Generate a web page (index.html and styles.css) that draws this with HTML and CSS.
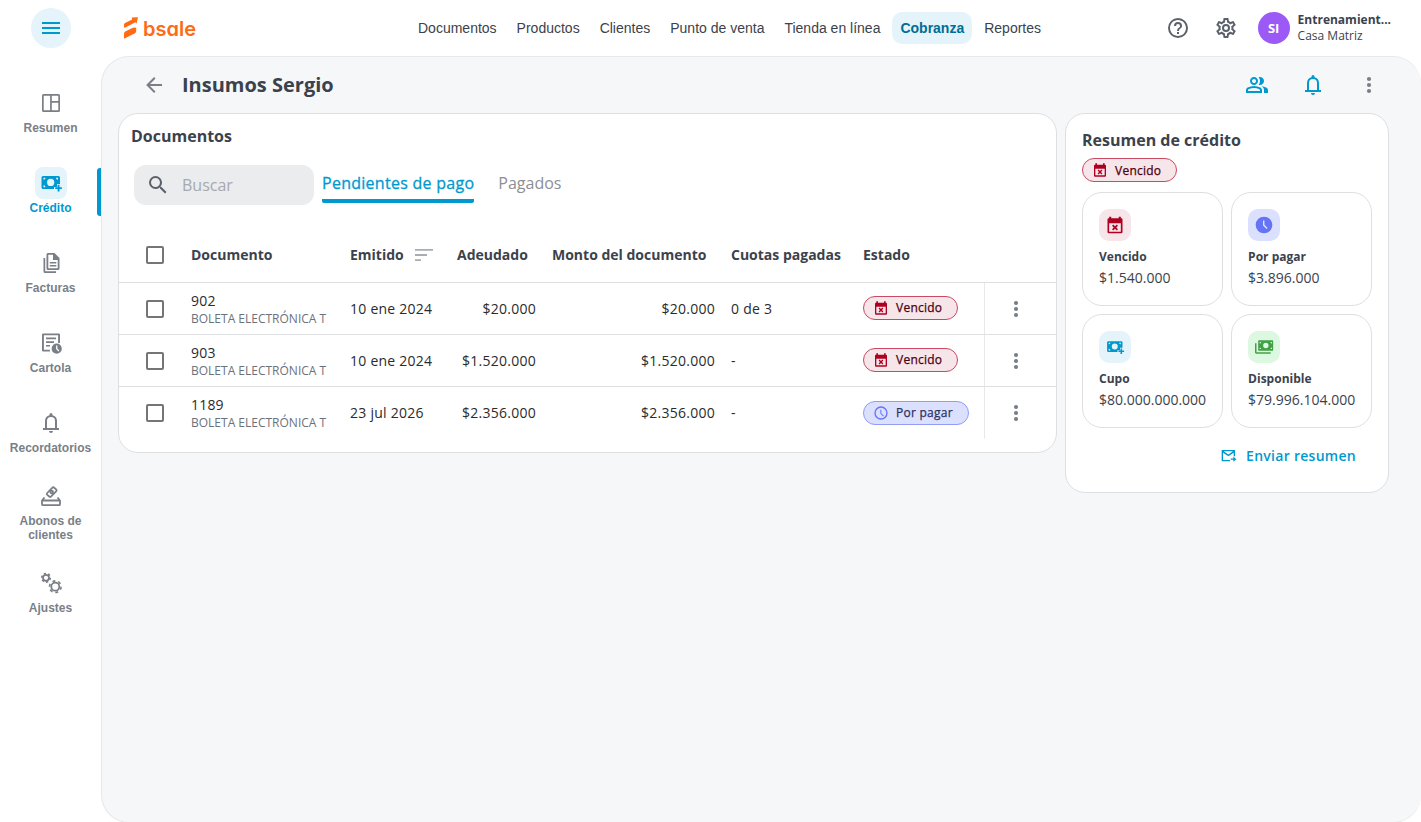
FILE: index.html
```html
<!DOCTYPE html>
<html lang="es">
<head>
  <meta charset="UTF-8">
  <meta name="viewport" content="width=device-width, initial-scale=1.0">
  <title>Cobranza - Insumos Sergio</title>
  <link rel="stylesheet" href="styles.css">
</head>
<body>

  <!-- Shared icons -->
  <svg class="icon-defs" xmlns="http://www.w3.org/2000/svg">
    <symbol id="i-bell" viewBox="0 0 24 24"><path fill-rule="evenodd" d="M4 19v-2h2v-7a6 6 0 0 1 4.500-5.800V3.500a1.500 1.500 0 0 1 3 0v.7A6 6 0 0 1 18 10v7h2v2H4Zm8 3a2 2 0 0 1-2-2h4a2 2 0 0 1-2 2Zm-4-5h8v-7a4 4 0 0 0-8 0v7Z"/></symbol>
    <symbol id="i-dots" viewBox="0 0 24 24"><circle cx="12" cy="6" r="2.100"/><circle cx="12" cy="12" r="2.100"/><circle cx="12" cy="18" r="2.100"/></symbol>
    <symbol id="i-calendar" viewBox="0 0 24 24"><path fill-rule="evenodd" d="M5 2h2.500v2h9V2H19v2h.5A1.500 1.500 0 0 1 21 5.500v15a1.500 1.500 0 0 1-1.500 1.500h-15A1.500 1.500 0 0 1 3 20.500v-15A1.500 1.500 0 0 1 4.500 4H5V2Zm0 8v10h14V10H5Zm3.400 2.900 1.500-1.500 2.100 2.100 2.100-2.100 1.500 1.500-2.100 2.100 2.100 2.100-1.500 1.500-2.100-2.100-2.100 2.100-1.500-1.500 2.100-2.100-2.100-2.100Z"/></symbol>
    <symbol id="i-clock-outline" viewBox="0 0 24 24"><path d="M12 20a8 8 0 1 0 0-16 8 8 0 0 0 0 16m0-18a10 10 0 1 1 0 20 10 10 0 0 1 0-20m.5 5v5.200l3.800 3.800-1.200 1.100L11 12.800V7h1.500Z"/></symbol>
    <symbol id="i-cash-plus" viewBox="0 0 24 24"><path fill-rule="evenodd" d="M4 5h15.500A1.500 1.500 0 0 1 21 6.500V13h-3v3h-3v2H4a1.500 1.500 0 0 1-1.500-1.500v-10A1.500 1.500 0 0 1 4 5Zm7.700 2.800a3.600 3.600 0 1 0 0 7.200 3.600 3.600 0 0 0 0-7.200ZM4.500 6.800v2a2 2 0 0 0 2-2h-2Zm12.500 0a2 2 0 0 0 2 2v-2h-2ZM4.500 14.200v2h2a2 2 0 0 0-2-2Z"/><path d="M18.600 13.800h1.900v2.400h2.400v1.900h-2.400v2.400h-1.900v-2.400h-2.400v-1.900h2.400z"/></symbol>
  </svg>

  <!-- Top bar -->
  <header class="topbar">
    <div class="menu-slot">
      <button class="menu-button" aria-label="Menú">
        <svg class="icon" viewBox="0 0 24 24"><path d="M3 6h18v2H3V6m0 5h18v2H3v-2m0 5h18v2H3v-2Z"/></svg>
      </button>
    </div>
    <a class="logo" href="#">
      <svg class="logo-mark" viewBox="0 0 14 22"><path d="M0 10.300V7.500Q0 6.500 1 5.900L8.200 2.600 7.600.6 14 .3l-1.400 6.200-1.300-1.200L1 10.700Z"/><path d="M0 21.700v-5Q0 15.300 1.200 14.600L9 10.800q2.500-.8 3.200.2v3.200q-.2 1.300-1.300 2Z"/></svg>
      <span class="logo-text">bsale</span>
    </a>
    <nav class="main-nav">
      <a href="#">Documentos</a>
      <a href="#">Productos</a>
      <a href="#">Clientes</a>
      <a href="#">Punto de venta</a>
      <a href="#">Tienda en línea</a>
      <a href="#" class="active">Cobranza</a>
      <a href="#">Reportes</a>
    </nav>
    <div class="user-area">
      <svg class="icon" viewBox="0 0 24 24"><path d="M11 18h2v-2h-2v2m1-16A10 10 0 0 0 2 12a10 10 0 0 0 10 10 10 10 0 0 0 10-10A10 10 0 0 0 12 2m0 18c-4.410 0-8-3.590-8-8s3.590-8 8-8 8 3.590 8 8-3.590 8-8 8m0-14a4 4 0 0 0-4 4h2a2 2 0 0 1 2-2 2 2 0 0 1 2 2c0 2-3 1.750-3 5h2c0-2.250 3-2.500 3-5a4 4 0 0 0-4-4Z"/></svg>
      <svg class="icon" viewBox="0 0 24 24"><path d="M12 8a4 4 0 0 1 4 4 4 4 0 0 1-4 4 4 4 0 0 1-4-4 4 4 0 0 1 4-4m0 2a2 2 0 0 0-2 2 2 2 0 0 0 2 2 2 2 0 0 0 2-2 2 2 0 0 0-2-2m-2 12c-.25 0-.46-.18-.5-.42l-.37-2.650c-.63-.25-1.170-.59-1.690-.99l-2.490 1.010c-.22.080-.49 0-.61-.22l-2-3.460a.493.493 0 0 1 .12-.64l2.110-1.660L4.500 12l.070-1-2.110-1.630a.493.493 0 0 1-.12-.64l2-3.460c.12-.22.390-.31.610-.22l2.490 1c.52-.39 1.060-.73 1.690-.98l.37-2.650c.040-.24.250-.42.500-.42h4c.25 0 .46.180.5.420l.37 2.650c.63.250 1.170.590 1.690.980l2.490-1c.22-.090.490 0 .61.220l2 3.460c.13.220.070.490-.12.640L19.430 11l.07 1-.07 1 2.110 1.630c.19.150.250.420.12.640l-2 3.460c-.12.220-.39.310-.61.220l-2.490-1c-.52.390-1.060.730-1.690.980l-.37 2.650c-.040.240-.25.420-.5.420h-4m1.250-18-.37 2.610c-1.200.250-2.260.890-3.030 1.780L5.440 7.350l-.75 1.300L6.800 10.200a5.550 5.550 0 0 0 0 3.600l-2.120 1.560.75 1.300 2.430-1.040c.77.880 1.820 1.520 3.010 1.760l.37 2.620h1.520l.37-2.610c1.190-.25 2.240-.89 3.010-1.770l2.430 1.040.75-1.300-2.120-1.550c.4-1.170.4-2.440 0-3.610l2.110-1.550-.75-1.300-2.410 1.040a5.420 5.420 0 0 0-3.030-1.770L12.750 4h-1.500Z"/></svg>
      <div class="user">
        <span class="avatar">SI</span>
        <div class="user-info">
          <strong>Entrenamient...</strong>
          <span>Casa Matriz</span>
        </div>
      </div>
    </div>
  </header>

  <div class="layout">

    <!-- Sidebar -->
    <aside class="sidebar">
      <a href="#" class="side-item">
        <span class="side-icon"><svg class="icon" viewBox="0 0 24 24"><path fill-rule="evenodd" d="M4.500 3h15A1.500 1.500 0 0 1 21 4.500v15a1.500 1.500 0 0 1-1.500 1.500h-15A1.500 1.500 0 0 1 3 19.500v-15A1.500 1.500 0 0 1 4.500 3Zm.2 1.700v14.600h6.400V4.700H4.700Zm8.100 0V10h6.500V4.700h-6.500Zm0 7v7.600h6.500v-7.600h-6.500Z"/></svg></span>
        Resumen
      </a>
      <a href="#" class="side-item active">
        <span class="side-icon"><svg class="icon"><use href="#i-cash-plus"/></svg></span>
        Crédito
      </a>
      <a href="#" class="side-item">
        <span class="side-icon"><svg class="icon" viewBox="0 0 24 24"><path fill-rule="evenodd" d="M9 2h6.500L20.500 7v10.500A1.500 1.500 0 0 1 19 19H9a1.500 1.500 0 0 1-1.500-1.500v-14A1.500 1.500 0 0 1 9 2Zm.3 1.800v13.400h9.400V9H14V3.800H9.300Zm1.500 7.200h6.500v1.500h-6.500V11Zm0 3h6.500v1.500h-6.500V14Z"/><path d="M4.500 7h1.700v13.300H17V22H6a1.500 1.500 0 0 1-1.500-1.500z"/></svg></span>
        Facturas
      </a>
      <a href="#" class="side-item">
        <span class="side-icon"><svg class="icon" viewBox="0 0 24 24"><path d="M4.300 2.500h15.400A1.300 1.300 0 0 1 21 3.800V12h-1.900V4.300H4.900v14.400h6v1.800H4.300A1.300 1.300 0 0 1 3 19.200V3.800a1.300 1.300 0 0 1 1.300-1.300Z"/><path d="M7 6.500h10v1.700H7zM7 10.200h8v1.700H7zM7 13.900h4v1.700H7z"/><path fill-rule="evenodd" d="M17.700 12.600a5.100 5.100 0 1 1 0 10.200 5.100 5.100 0 0 1 0-10.200Zm-.6 2v3.500l2.300 2.300.9-.9-1.900-1.900v-3h-1.300Z"/></svg></span>
        Cartola
      </a>
      <a href="#" class="side-item">
        <span class="side-icon"><svg class="icon"><use href="#i-bell"/></svg></span>
        Recordatorios
      </a>
      <a href="#" class="side-item tall">
        <span class="side-icon"><svg class="icon stroke" viewBox="0 0 24 24"><path d="M5.500 13.500 3 16.500v3.700q0 1 1 1h16q1 0 1-1v-3.700l-2.500-3M3 16.500h18"/><path d="m8.200 9 5-5.200q1-1 2-.1l1.900 1.600q1 1 0 2l-4.900 5.100q-1 1-2 .1l-1.900-1.600q-1-.9-.1-1.900Z"/><circle cx="12.700" cy="8" r="1.300"/></svg></span>
        Abonos de clientes
      </a>
      <a href="#" class="side-item">
        <span class="side-icon"><svg class="icon stroke gears" viewBox="0 0 24 24"><circle cx="7" cy="6.800" r="3"/><circle class="teeth" cx="7" cy="6.800" r="4.300" pathLength="12"/><circle cx="16.300" cy="15.700" r="4"/><circle class="teeth" cx="16.300" cy="15.700" r="5.800" pathLength="12"/></svg></span>
        Ajustes
      </a>
    </aside>

    <!-- Content -->
    <main class="content">
      <div class="page-header">
        <svg class="icon back" viewBox="0 0 24 24"><path d="M20 11v2H8l5.500 5.500-1.420 1.420L4.160 12l7.920-7.920L13.500 5.500 8 11h12Z"/></svg>
        <h1>Insumos Sergio</h1>
        <div class="page-actions">
          <svg class="icon" viewBox="0 0 24 24"><path fill-rule="evenodd" d="M1 20v-2.800q0-.85.438-1.562T2.600 14.550q1.550-.775 3.150-1.162T9 13t3.250.388 3.150 1.162q.725.375 1.163 1.088T17 17.200V20zm18 0v-3q0-1.100-.612-2.113T16.650 13.150q1.275.150 2.400.513t2.100.887q.9.5 1.375 1.112T23 17v3zM9 12q-1.650 0-2.825-1.175T5 8t1.175-2.825T9 4t2.825 1.175T13 8t-1.175 2.825T9 12m10-4q0 1.650-1.175 2.825T15 12q-.275 0-.7-.062T13.600 11.800q.675-.8 1.037-1.775T15 8t-.362-2.025T13.600 4.200q.350-.125.700-.163T15 4q1.650 0 2.825 1.175T19 8M3 18h12v-.8q0-.275-.137-.5t-.363-.35q-1.350-.675-2.725-1.012T9 15t-2.775.338T3.500 16.350q-.225.125-.362.350T3 17.200zm6-8q.825 0 1.413-.587T11 8t-.587-1.412T9 6t-1.412.588T7 8t.588 1.413T9 10"/></svg>
          <svg class="icon"><use href="#i-bell"/></svg>
          <svg class="icon more"><use href="#i-dots"/></svg>
        </div>
      </div>

      <div class="panels">
        <section class="card documents">
          <h2>Documentos</h2>
          <div class="filters">
            <label class="search">
              <svg class="icon" viewBox="0 0 24 24"><path d="M9.500 3A6.500 6.500 0 0 1 16 9.500c0 1.610-.59 3.090-1.560 4.230l.27.270h.79l5 5-1.500 1.500-5-5v-.79l-.27-.27A6.516 6.516 0 0 1 9.500 16 6.500 6.500 0 0 1 3 9.500 6.500 6.500 0 0 1 9.500 3m0 2C7 5 5 7 5 9.500S7 14 9.500 14 14 12 14 9.500 12 5 9.500 5Z"/></svg>
              <input type="text" placeholder="Buscar">
            </label>
            <div class="tabs">
              <button class="tab active">Pendientes de pago</button>
              <button class="tab">Pagados</button>
            </div>
          </div>

          <table>
            <colgroup>
              <col class="c-check"><col class="c-doc"><col class="c-date"><col class="c-due"><col class="c-amount"><col class="c-quota"><col class="c-status"><col class="c-actions">
            </colgroup>
            <thead>
              <tr>
                <th class="check"><input type="checkbox"></th>
                <th>Documento</th>
                <th><span class="sortable">Emitido <svg class="icon" viewBox="0 0 24 24"><path d="M3 6h18v1.800H3zM3 11.100h12v1.800H3zM3 16.200h6V18H3z"/></svg></span></th>
                <th>Adeudado</th>
                <th>Monto del documento</th>
                <th>Cuotas pagadas</th>
                <th>Estado</th>
                <th></th>
              </tr>
            </thead>
            <tbody>
              <tr>
                <td class="check"><input type="checkbox"></td>
                <td class="doc"><b>902</b><small>BOLETA ELECTRÓNICA T</small></td>
                <td>10 ene 2024</td>
                <td class="num">$20.000</td>
                <td class="num">$20.000</td>
                <td>0 de 3</td>
                <td><span class="chip overdue"><svg class="icon"><use href="#i-calendar"/></svg>Vencido</span></td>
                <td class="actions"><svg class="icon"><use href="#i-dots"/></svg></td>
              </tr>
              <tr>
                <td class="check"><input type="checkbox"></td>
                <td class="doc"><b>903</b><small>BOLETA ELECTRÓNICA T</small></td>
                <td>10 ene 2024</td>
                <td class="num">$1.520.000</td>
                <td class="num">$1.520.000</td>
                <td>-</td>
                <td><span class="chip overdue"><svg class="icon"><use href="#i-calendar"/></svg>Vencido</span></td>
                <td class="actions"><svg class="icon"><use href="#i-dots"/></svg></td>
              </tr>
              <tr>
                <td class="check"><input type="checkbox"></td>
                <td class="doc"><b>1189</b><small>BOLETA ELECTRÓNICA T</small></td>
                <td>23 jul 2026</td>
                <td class="num">$2.356.000</td>
                <td class="num">$2.356.000</td>
                <td>-</td>
                <td><span class="chip pending"><svg class="icon"><use href="#i-clock-outline"/></svg>Por pagar</span></td>
                <td class="actions"><svg class="icon"><use href="#i-dots"/></svg></td>
              </tr>
            </tbody>
          </table>
        </section>

        <section class="card summary">
          <h2>Resumen de crédito</h2>
          <span class="chip overdue"><svg class="icon"><use href="#i-calendar"/></svg>Vencido</span>
          <div class="summary-grid">
            <div class="stat">
              <span class="stat-icon red"><svg class="icon"><use href="#i-calendar"/></svg></span>
              <strong>Vencido</strong>
              <span>$1.540.000</span>
            </div>
            <div class="stat">
              <span class="stat-icon indigo"><svg class="icon" viewBox="0 0 24 24"><path fill-rule="evenodd" d="M12 2a10 10 0 1 1 0 20 10 10 0 0 1 0-20Zm-1.200 4.500v6l4.300 4.300 1.200-1.200-3.800-3.800V6.500h-1.700Z"/></svg></span>
              <strong>Por pagar</strong>
              <span>$3.896.000</span>
            </div>
            <div class="stat">
              <span class="stat-icon blue"><svg class="icon"><use href="#i-cash-plus"/></svg></span>
              <strong>Cupo</strong>
              <span>$80.000.000.000</span>
            </div>
            <div class="stat">
              <span class="stat-icon green"><svg class="icon" viewBox="0 0 24 24"><path fill-rule="evenodd" d="M6 4h16a1 1 0 0 1 1 1v10.500a1 1 0 0 1-1 1H6a1 1 0 0 1-1-1V5a1 1 0 0 1 1-1Zm8.200 3a3.200 3.200 0 1 0 0 6.400 3.200 3.200 0 0 0 0-6.400ZM6.800 6v1.800A1.800 1.800 0 0 0 8.600 6H6.800Zm13 0a1.800 1.800 0 0 0 1.800 1.800V6h-1.800Zm-13 6.700v1.800h1.800a1.800 1.800 0 0 0-1.800-1.800Zm14.800 0a1.800 1.800 0 0 0-1.800 1.800h1.800v-1.800Z"/><path d="M1.200 7.500H3v10.700h17V20H2.500a1.300 1.300 0 0 1-1.300-1.300z"/></svg></span>
              <strong>Disponible</strong>
              <span>$79.996.104.000</span>
            </div>
          </div>
          <button class="send-button">
            <svg class="icon" viewBox="0 0 24 24"><path d="M1 3h20v9.500h-2V7l-8 5.500L3 7v11h10.500v2H1V3Zm3 2 7 4.700L18 5H4Z"/><path d="M14.500 15.700h4v-2.800l4.500 3.900-4.500 3.900v-3h-4z"/></svg>
            Enviar resumen
          </button>
        </section>
      </div>
    </main>
  </div>

</body>
</html>
```
FILE: styles.css
```css
/* General styles */
* {
  box-sizing: border-box;
}

body {
  margin: 0;
  height: 100vh;
  overflow: hidden;
  font-family: "Open Sans", sans-serif;
  font-size: 14px;
  color: #3b424c;
  background-color: #fff;
}

a {
  color: inherit;
  text-decoration: none;
}

button {
  border: none;
  background: none;
  padding: 0;
  font-family: inherit;
  cursor: pointer;
}

h1, h2 {
  margin: 0;
}

.icon-defs {
  display: none;
}

.icon {
  width: 24px;
  height: 24px;
  fill: currentColor;
  flex-shrink: 0;
}

.icon.stroke {
  fill: none;
  stroke: currentColor;
  stroke-width: 1.8;
}

/* Top bar */
.topbar {
  display: grid;
  grid-template-columns: 101px 309px 1fr auto;
  align-items: center;
  height: 56px;
}

.menu-slot {
  display: flex;
  justify-content: center;
}

.menu-button {
  display: flex;
  justify-content: center;
  align-items: center;
  width: 40px;
  height: 40px;
  border-radius: 50%;
  color: #0099cf;
  background-color: #e5f4fa;
}

.logo {
  display: flex;
  align-items: center;
  gap: 5px;
  padding-left: 23px;
  color: #ff6a13;
}

.logo-mark {
  width: 14px;
  height: 22px;
  fill: currentColor;
}

.logo-text {
  padding-top: 1px;
  font-family: Inter, sans-serif;
  font-feature-settings: "cv11";
  font-size: 20px;
  font-weight: 600;
  line-height: 24px;
}

.main-nav {
  display: flex;
  gap: 4px;
  font-family: "Liberation Sans", Arial, sans-serif;
}

.main-nav a {
  height: 32px;
  padding: 0 8px;
  border-radius: 10px;
  line-height: 32px;
}

.main-nav a.active {
  font-weight: bold;
  color: #006d94;
  background-color: #e5f4fa;
}

.user-area {
  display: flex;
  align-items: center;
  gap: 24px;
  padding-right: 30px;
  color: #5b616b;
}

.user {
  display: flex;
  align-items: center;
  gap: 8px;
  margin-left: -4px;
  color: #3b424c;
}

.avatar {
  width: 32px;
  height: 32px;
  border-radius: 50%;
  font-weight: bold;
  font-size: 13px;
  line-height: 32px;
  text-align: center;
  color: #fff;
  background-color: #9b59f6;
}

.user-info {
  display: flex;
  flex-direction: column;
  font-size: 12px;
  line-height: 16px;
}

/* Sidebar */
.layout {
  display: grid;
  grid-template-columns: 101px 1fr;
  height: 767px;
}

.sidebar {
  display: flex;
  flex-direction: column;
  gap: 32px;
  padding-top: 31px;
  font-family: "Liberation Sans", Arial, sans-serif;
  font-size: 12px;
  font-weight: bold;
  color: #7a7f87;
}

.side-item {
  display: flex;
  flex-direction: column;
  align-items: center;
  height: 48px;
  line-height: 14px;
  text-align: center;
}

.side-item.tall {
  height: 62px;
  margin: -7px 0;
  padding: 0 16px;
}

.side-item.active {
  position: relative;
  color: #0099cf;
}

.side-item.active::after {
  content: "";
  position: absolute;
  top: 1px;
  right: 0;
  width: 4px;
  height: 48px;
  border-radius: 3px 0 0 3px;
  background-color: #0099cf;
}

.side-icon {
  display: flex;
  flex-shrink: 0;
  justify-content: center;
  align-items: center;
  width: 32px;
  height: 32px;
  margin-bottom: 2px;
  border-radius: 8px;
}

.active .side-icon {
  background-color: #e5f4fa;
}

.gears .teeth {
  stroke-dasharray: 1 1;
  stroke-width: 1.6;
}

/* Content */
.content {
  padding: 0 16px;
  border: 1px solid #e6e8ea;
  border-right: none;
  border-radius: 28px;
  background-color: #f5f7f9;
}

.page-header {
  display: flex;
  align-items: center;
  height: 56px;
  padding: 0 24px;
}

.page-header h1 {
  margin-left: 16px;
  padding-bottom: 2px;
  font-size: 20px;
  font-weight: bold;
}

.back {
  color: #7a7f87;
}

.page-actions {
  display: flex;
  gap: 32px;
  margin-left: auto;
  color: #0099cf;
}

.more {
  color: #7a7f87;
}

.panels {
  display: flex;
  align-items: flex-start;
  gap: 8px;
}

.card {
  border: 1px solid #dedfe1;
  border-radius: 20px;
  background-color: #fff;
}

.card h2 {
  font-size: 16px;
  line-height: 22px;
}

/* Documents */
.documents {
  width: 939px;
  height: 340px;
}

.documents h2 {
  padding: 11px 12px 0;
}

.filters {
  display: flex;
  align-items: center;
  gap: 8px;
  padding: 18px 15px 0;
}

.search {
  display: flex;
  align-items: center;
  gap: 12px;
  width: 180px;
  height: 40px;
  padding: 0 12px;
  border-radius: 12px;
  color: #5b616b;
  background-color: #ebecee;
}

.search input {
  width: 110px;
  padding: 0;
  border: none;
  outline: none;
  font-family: inherit;
  font-size: 16px;
  background: none;
}

.search input::placeholder {
  color: #a6a9ae;
}

.tabs {
  display: flex;
  gap: 24px;
}

.tab {
  height: 36px;
  border-bottom: 4px solid transparent;
  border-radius: 2px;
  font-size: 16px;
  color: #8b8f96;
}

.tab.active {
  letter-spacing: 0.27px;
  -webkit-text-stroke: 0.3px currentColor;
  color: #0099cf;
  border-bottom-color: #0099cf;
}

table {
  width: 937px;
  margin-top: 22px;
  table-layout: fixed;
  border-collapse: separate;
  border-spacing: 0;
}

.c-check { width: 64px; }
.c-doc { width: 159px; }
.c-date { width: 107px; }
.c-due { width: 95px; }
.c-amount { width: 179px; }
.c-quota { width: 132px; }
.c-status { width: 129px; }
.c-actions { width: 72px; }

th, td {
  padding: 0 8px;
  text-align: left;
  white-space: nowrap;
}

th {
  height: 56px;
  border-bottom: 1px solid #dedfe1;
}

td {
  height: 52px;
  border-bottom: 1px solid #dedfe1;
  letter-spacing: 0.25px;
  color: #2b2b2b;
}

tr:last-child td {
  border-bottom-color: transparent;
}

.check {
  padding: 0 0 0 27px;
}

.check input {
  display: block;
  appearance: none;
  width: 18px;
  height: 18px;
  margin: 0;
  border: 2px solid #757575;
  border-radius: 2px;
}

.sortable {
  display: flex;
  align-items: center;
  gap: 8px;
}

.sortable .icon {
  color: #a9adb3;
}

.num {
  text-align: right;
}

.doc {
  padding-top: 2px;
  letter-spacing: 0;
}

.doc b {
  display: block;
  font-weight: normal;
  letter-spacing: 0.2px;
  line-height: 18px;
}

.doc small {
  display: block;
  font-size: 12px;
  line-height: 17px;
  color: #6b717b;
}

.actions {
  border-left: 1px solid #e6e8ea;
  color: #7a7f87;
}

.actions .icon {
  display: block;
  margin-left: 11px;
}

/* Chips */
.chip {
  display: inline-flex;
  align-items: center;
  gap: 7px;
  height: 24px;
  padding: 0 15px 0 9px;
  border: 1px solid;
  border-radius: 12px;
  font-size: 12px;
  letter-spacing: 0.25px;
  -webkit-text-stroke: 0.25px currentColor;
}

td .chip.overdue {
  margin-bottom: 2px;
}

.chip .icon {
  width: 16px;
  height: 16px;
}

.chip.overdue {
  color: #4d0010;
  border-color: #c94a63;
  background-color: #f6e5e9;
}

.chip.overdue .icon {
  color: #b00020;
}

.chip.pending {
  color: #2c315f;
  border-color: #919cf5;
  background-color: #dce0ff;
}

.chip.pending .icon {
  color: #6574f5;
}

/* Credit summary */
.summary {
  width: 324px;
  height: 380px;
  padding: 15px 16px;
}

.summary > .chip {
  margin-top: 7px;
}

.summary-grid {
  display: grid;
  grid-template-columns: 1fr 1fr;
  gap: 8px;
  margin-top: 10px;
}

.stat {
  display: flex;
  flex-direction: column;
  height: 114px;
  padding: 16px;
  border: 1px solid #dedfe1;
  border-radius: 20px;
}

.stat strong {
  margin-top: 8px;
  font-size: 12px;
  line-height: 16px;
}

.stat span:last-child {
  margin-top: 3px;
  line-height: 20px;
}

.stat-icon {
  display: flex;
  justify-content: center;
  align-items: center;
  width: 32px;
  height: 32px;
  border-radius: 10px;
}

.stat-icon .icon {
  width: 20px;
  height: 20px;
}

.red { color: #b00020; background-color: #f6e5e9; }
.indigo { color: #6574f5; background-color: #dce0ff; }
.blue { color: #0099cf; background-color: #e5f4fa; }
.green { color: #43a047; background-color: #dcf8e0; }

.send-button {
  display: flex;
  align-items: center;
  gap: 9px;
  margin: 17px 16px 0 auto;
  font-size: 14px;
  font-weight: 600;
  letter-spacing: 0.28px;
  line-height: 22px;
  color: #0099cf;
}

.send-button .icon {
  width: 16px;
  height: 16px;
}
```
